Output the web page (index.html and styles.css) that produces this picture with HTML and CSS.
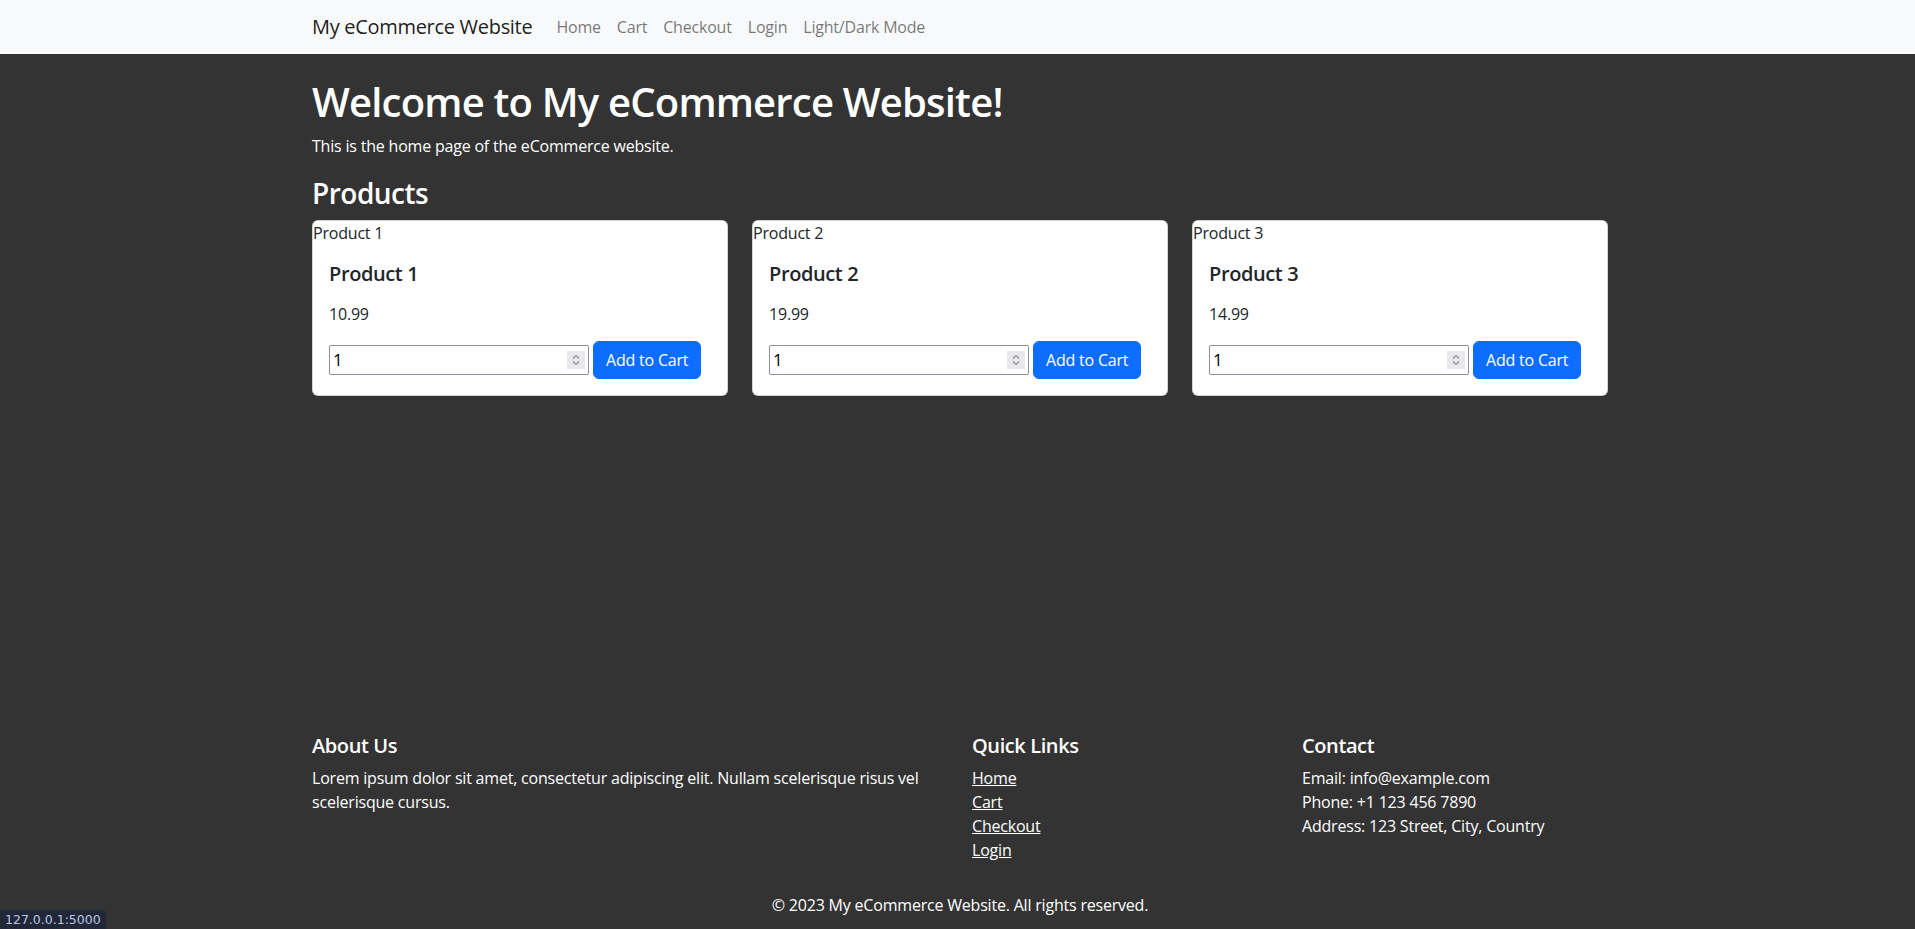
FILE: index.html
```html
<!DOCTYPE html>
<html lang="en">
<head>
<meta charset="utf-8">
<title>My eCommerce Website</title>
<link rel="stylesheet" href="styles.css">
</head>
<body>
<nav class="navbar">
  <div class="container nav-inner">
    <a class="brand" href="#">My eCommerce Website</a>
    <ul class="nav-links">
      <li><a href="#">Home</a></li>
      <li><a href="#">Cart</a></li>
      <li><a href="#">Checkout</a></li>
      <li><a href="#">Login</a></li>
      <li><a href="#">Light/Dark Mode</a></li>
    </ul>
  </div>
</nav>

<main class="container main">
  <h1 class="title">Welcome to My eCommerce Website!</h1>
  <p class="intro">This is the home page of the eCommerce website.</p>
  <h3 class="section-title">Products</h3>
  <div class="products">
    <div class="card">
      <span class="card-img">Product 1</span>
      <div class="card-body">
        <h5 class="card-title">Product 1</h5>
        <p class="card-price">10.99</p>
        <form class="cart-form">
          <div class="qty"><input class="qty-input" type="text" value="1"><span class="spinner"><svg width="10" height="14" viewBox="0 0 10 14"><path d="M2 5.5 L5 2.5 L8 5.5 M2 8.5 L5 11.5 L8 8.5" fill="none" stroke="#8a8a93" stroke-width="1.2"/></svg></span></div>
          <button class="btn" type="button">Add to Cart</button>
        </form>
      </div>
    </div>
    <div class="card">
      <span class="card-img">Product 2</span>
      <div class="card-body">
        <h5 class="card-title">Product 2</h5>
        <p class="card-price">19.99</p>
        <form class="cart-form">
          <div class="qty"><input class="qty-input" type="text" value="1"><span class="spinner"><svg width="10" height="14" viewBox="0 0 10 14"><path d="M2 5.5 L5 2.5 L8 5.5 M2 8.5 L5 11.5 L8 8.5" fill="none" stroke="#8a8a93" stroke-width="1.2"/></svg></span></div>
          <button class="btn" type="button">Add to Cart</button>
        </form>
      </div>
    </div>
    <div class="card">
      <span class="card-img">Product 3</span>
      <div class="card-body">
        <h5 class="card-title">Product 3</h5>
        <p class="card-price">14.99</p>
        <form class="cart-form">
          <div class="qty"><input class="qty-input" type="text" value="1"><span class="spinner"><svg width="10" height="14" viewBox="0 0 10 14"><path d="M2 5.5 L5 2.5 L8 5.5 M2 8.5 L5 11.5 L8 8.5" fill="none" stroke="#8a8a93" stroke-width="1.2"/></svg></span></div>
          <button class="btn" type="button">Add to Cart</button>
        </form>
      </div>
    </div>
  </div>
</main>

<footer class="footer">
  <div class="container">
    <div class="footer-row">
      <div class="footer-col about">
        <h5 class="footer-title">About Us</h5>
        <p class="footer-text">Lorem ipsum dolor sit amet, consectetur adipiscing elit. Nullam scelerisque risus vel scelerisque cursus.</p>
      </div>
      <div class="footer-col links">
        <h5 class="footer-title">Quick Links</h5>
        <ul class="footer-list">
          <li><a href="#">Home</a></li>
          <li><a href="#">Cart</a></li>
          <li><a href="#">Checkout</a></li>
          <li><a href="#">Login</a></li>
        </ul>
      </div>
      <div class="footer-col contact">
        <h5 class="footer-title">Contact</h5>
        <ul class="footer-list plain">
          <li>Email: info@example.com</li>
          <li>Phone: +1 123 456 7890</li>
          <li>Address: 123 Street, City, Country</li>
        </ul>
      </div>
    </div>
    <p class="copyright">© 2023 My eCommerce Website. All rights reserved.</p>
  </div>
</footer>

<div class="statusbar">127.0.0.1:5000</div>
</body>
</html>
```
FILE: styles.css
```css
* { box-sizing: border-box; }

html, body { height: 100%; }

body {
  margin: 0;
  background: #333333;
  color: #ffffff;
  font-family: "Open Sans", "Noto Sans", sans-serif;
  font-size: 16px;
  line-height: 1.5;
  letter-spacing: -0.2px;
  display: flex;
  flex-direction: column;
  min-height: 100vh;
}

.container {
  width: 1296px;
  margin-left: calc(50% - 645.5px);
}

/* navbar */
.navbar {
  background: #f8f9fa;
  height: 54px;
  flex: none;
}
.nav-inner {
  display: flex;
  align-items: center;
  height: 100%;
}
.brand {
  font-size: 20px;
  color: rgba(0, 0, 0, 0.9);
  text-decoration: none;
  margin-right: 16px;
  line-height: 30px;
  letter-spacing: -0.3px;
}
.nav-links {
  display: flex;
  list-style: none;
  margin: 0;
  padding: 0;
}
.nav-links a {
  display: block;
  padding: 8px 8px;
  color: rgba(0, 0, 0, 0.55);
  text-decoration: none;
  line-height: 24px;
}

/* main */
.main { flex: 1 0 auto; }
.title {
  font-size: 40px;
  font-weight: 600;
  line-height: 1.2;
  letter-spacing: -0.8px;
  margin: 24px 0 8px;
}
.intro { margin: 0; }
.section-title {
  font-size: 28px;
  font-weight: 600;
  line-height: 1.2;
  letter-spacing: -0.5px;
  margin: 19px 0 9px;
}

.products {
  display: grid;
  grid-template-columns: repeat(3, 416px);
  column-gap: 24px;
}
.card {
  background: #fff;
  color: #212529;
  border: 1px solid rgba(0, 0, 0, 0.175);
  border-radius: 6px;
}
.card-img {
  display: block;
  line-height: 24px;
  color: #212529;
}
.card-body { padding: 16px; }
.card-title {
  font-size: 20px;
  font-weight: 600;
  line-height: 24px;
  letter-spacing: -0.4px;
  margin: 1px 0 16px;
}
.card-price { margin: 0 0 15px; }
.cart-form {
  display: flex;
  align-items: center;
  gap: 4px;
}
.qty {
  display: flex;
  align-items: center;
  width: 260px;
  height: 30px;
  border: 1px solid #8f8f9d;
  border-radius: 2px;
  background: #fff;
  padding: 0 3px 0 3px;
}
.qty-input {
  flex: 1;
  min-width: 0;
  border: 0;
  outline: none;
  padding: 0;
  font-family: inherit;
  font-size: 17px;
  color: #000;
  background: transparent;
}
.spinner {
  width: 18px;
  height: 18px;
  background: #e9e9ed;
  display: flex;
  align-items: center;
  justify-content: center;
}
.btn {
  background: #0d6efd;
  color: #fff;
  border: 1px solid #0d6efd;
  border-radius: 6px;
  padding: 6px 12px;
  font-family: inherit;
  font-size: 16px;
  line-height: 24px;
  letter-spacing: -0.2px;
  cursor: pointer;
}

/* footer */
.footer {
  flex: none;
  padding: 24px 0 12px;
}
.footer-row {
  display: grid;
  grid-template-columns: 660px 330px 306px;
}
.footer-col.about { padding-right: 12px; }
.footer-title {
  font-size: 20px;
  font-weight: 600;
  line-height: 24px;
  letter-spacing: -0.4px;
  margin: 0 0 8px;
}
.footer-text { margin: 0; }
.footer-list {
  list-style: none;
  margin: 0;
  padding: 0;
}
.footer-list a { color: #fff; }
.copyright {
  text-align: center;
  margin: 31px 0 0;
}

.statusbar {
  position: fixed;
  left: 0;
  bottom: 0;
  background: #222738;
  color: #b9c4e2;
  font-family: "DejaVu Sans", sans-serif;
  font-size: 12.5px;
  letter-spacing: 0;
  line-height: 19px;
  padding: 0 5px;
  border-top-right-radius: 4px;
}
```
